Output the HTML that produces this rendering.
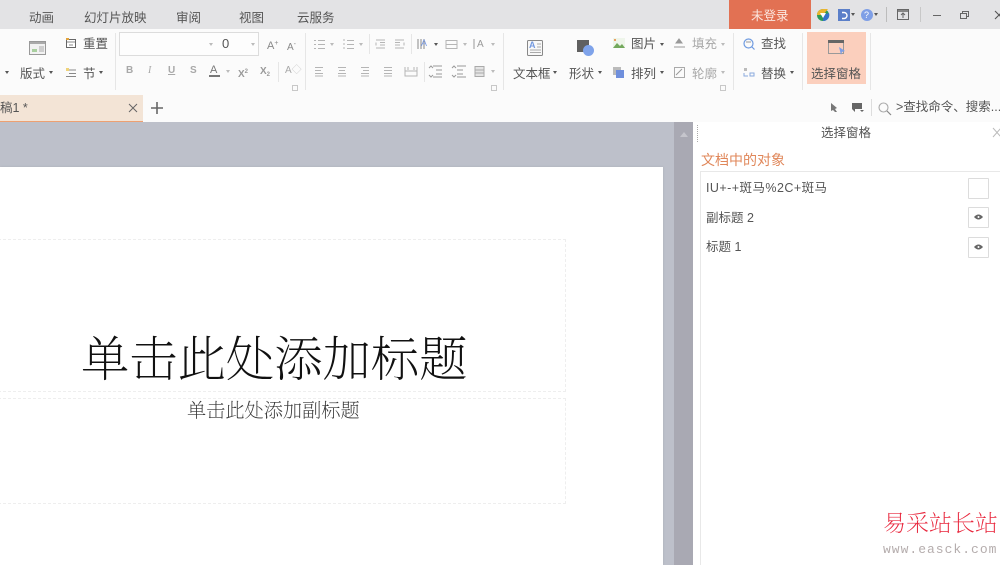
<!DOCTYPE html>
<html lang="zh"><head><meta charset="utf-8"><title>WPS</title>
<style>
html,body{margin:0;padding:0;background:#fff}
#p{position:relative;width:1000px;height:565px;overflow:hidden;background:#bdc0ca;font-family:"Liberation Sans","Noto Sans CJK SC",sans-serif;color:#555;filter:blur(.35px)}
.a{position:absolute}
.t{position:absolute;white-space:nowrap;line-height:16px;font-size:12.5px}
.g{color:#a8a8a8}
.c{position:absolute;width:0;height:0;border-left:2.5px solid transparent;border-right:2.5px solid transparent;border-top:3px solid #555}
.cg{border-top-color:#bbb}
.s{position:absolute;width:1px;background:#e6e6e6}
svg{position:absolute;overflow:visible}
.box{position:absolute;width:19px;height:19px;background:#fff;border:1px solid #dcdcdc;border-radius:1px}
</style></head><body><div id="p">
<!-- top bar -->
<div class="a" style="left:0;top:0;width:1000px;height:29px;background:#e3e3e5"></div>
<div class="t" style="left:29px;top:9.500px">动画</div>
<div class="t" style="left:84px;top:9.500px">幻灯片放映</div>
<div class="t" style="left:176px;top:9.500px">审阅</div>
<div class="t" style="left:239px;top:9.500px">视图</div>
<div class="t" style="left:297px;top:9.500px">云服务</div>
<div class="a" style="left:729px;top:0;width:82px;height:29px;background:#e27153"></div>
<div class="t" style="left:751px;top:8px;color:#fbe6df;font-size:12.5px">未登录</div>
<svg style="left:816px;top:8px" width="14" height="14" viewBox="0 0 14 14"><circle cx="7" cy="7" r="6" fill="#2d9a57"/><path d="M1 7a6 6 0 0 1 6-6h5l-5 6z" fill="#eab52e"/><path d="M13 5a6 6 0 0 1-6 8L7 7z" fill="#3573c9"/><path d="M4 5h6L7 10z" fill="#fff"/></svg>
<svg style="left:838px;top:9px" width="12" height="12" viewBox="0 0 12 12"><rect width="12" height="12" fill="#5b7fc9"/><path d="M4 3.5h2a3 3 0 0 1 0 6H4" fill="none" stroke="#fff" stroke-width="1.4"/></svg>
<div class="c" style="left:851px;top:13px"></div>
<div class="a" style="left:861px;top:9px;width:12px;height:12px;border-radius:50%;background:#7f9fe6"></div>
<div class="t" style="left:864px;top:7px;font-size:9px;color:#fff">?</div>
<div class="c" style="left:874px;top:13px"></div>
<div class="s" style="left:886px;top:7px;height:15px;background:#bcbcbc"></div>
<svg style="left:897px;top:9px" width="12" height="11" viewBox="0 0 12 11"><rect x=".5" y=".5" width="11" height="10" fill="none" stroke="#666"/><path d="M0 2h12" stroke="#666" stroke-width="1.5"/><path d="M6 9V4.5M4 6l2-2 2 2" fill="none" stroke="#666"/></svg>
<div class="s" style="left:920px;top:7px;height:15px;background:#c8c8c8"></div>
<div class="a" style="left:933px;top:15px;width:8px;height:1px;background:#666"></div>
<svg style="left:960px;top:11px" width="9" height="8" viewBox="0 0 9 8"><path d="M.5 2.5h6v5h-6zM2.5 2.5v-2h6v5h-2" fill="none" stroke="#666"/></svg>
<svg style="left:995px;top:11px" width="8" height="8" viewBox="0 0 8 8"><path d="M0 0l8 8M8 0L0 8" stroke="#555" stroke-width="1.1"/></svg>
<!-- ribbon -->
<div class="a" style="left:0;top:29px;width:1000px;height:93px;background:#fbfbfb"></div>
<div class="s" style="left:115px;top:33px;height:57px"></div>
<div class="s" style="left:305px;top:33px;height:57px"></div>
<div class="s" style="left:503px;top:33px;height:57px"></div>
<div class="s" style="left:733px;top:33px;height:57px"></div>
<div class="s" style="left:802px;top:33px;height:57px"></div>
<div class="s" style="left:870px;top:33px;height:57px"></div>
<div class="s" style="left:369px;top:34px;height:20px"></div>
<div class="s" style="left:411px;top:34px;height:20px"></div>
<div class="s" style="left:424px;top:62px;height:20px"></div>
<div class="s" style="left:278px;top:62px;height:20px"></div>
<!-- layout -->
<svg style="left:29px;top:41px" width="17" height="14" viewBox="0 0 17 14"><rect x=".5" y=".5" width="16" height="13" fill="#f2f2f2" stroke="#999"/><rect x="1" y="1" width="15" height="2" fill="#aaa"/><rect x="3" y="8" width="5" height="3" fill="#a9cf9f"/><path d="M10 6h5M10 8h5M10 10h5" stroke="#aaa"/></svg>
<div class="c" style="left:5px;top:71px"></div>
<div class="t" style="left:20px;top:66px">版式</div>
<div class="c" style="left:49px;top:71px"></div>
<svg style="left:66px;top:38px" width="10" height="10" viewBox="0 0 10 10"><rect x=".5" y="1.5" width="9" height="8" fill="#fff" stroke="#666"/><path d="M1 4h8M3 7h4" stroke="#888"/><rect x="0" y="0" width="3" height="2" fill="#e2a33c"/></svg>
<div class="t" style="left:83px;top:36px">重置</div>
<svg style="left:66px;top:68px" width="10" height="10" viewBox="0 0 10 10"><rect x="0" y="0" width="3" height="3" fill="#efd37a"/><path d="M3 2h7M3 5.5h7M0 8.500h10" stroke="#888" fill="none"/></svg>
<div class="t" style="left:83px;top:66px">节</div>
<div class="c" style="left:99px;top:71px"></div>
<!-- font -->
<div class="a" style="left:119px;top:32px;width:97px;height:22px;border:1px solid #dcdcdc;background:#fdfdfd"></div>
<div class="a" style="left:217px;top:32px;width:41px;height:22px;border:1px solid #dcdcdc;border-left:0;background:#fdfdfd"></div>
<div class="c cg" style="left:209px;top:43px"></div>
<div class="c cg" style="left:251px;top:43px"></div>
<div class="t" style="left:222px;top:36px;font-size:13px">0</div>
<div class="t g" style="left:267px;top:36px;font-size:11px;color:#888">A<span style="font-size:7px;vertical-align:4px">+</span></div>
<div class="t g" style="left:287px;top:37px;font-size:10px;color:#888">A<span style="font-size:7px;vertical-align:4px">-</span></div>
<div class="t g" style="left:126px;top:63px;font-size:10px;font-weight:bold">B</div>
<div class="t g" style="left:148px;top:63px;font-size:10px;font-style:italic;font-family:'Liberation Serif',serif">I</div>
<div class="t g" style="left:168px;top:63px;font-size:10px;text-decoration:underline;font-weight:bold">U</div>
<div class="t g" style="left:190px;top:63px;font-size:10px;font-weight:bold">S</div>
<div class="t" style="left:210px;top:62px;font-size:11px;color:#777">A</div>
<div class="a" style="left:209px;top:75px;width:11px;height:2px;background:#777"></div>
<div class="c cg" style="left:226px;top:70px"></div>
<div class="t g" style="left:238px;top:64px;font-size:10px;color:#999;font-weight:bold">X<span style="font-size:6px;vertical-align:4px">2</span></div>
<div class="t g" style="left:260px;top:64px;font-size:10px;color:#999;font-weight:bold">X<span style="font-size:6px;vertical-align:-2px">2</span></div>
<div class="t g" style="left:285px;top:63px;font-size:10px">A<span style="color:#ccc">◇</span></div>
<svg style="left:292px;top:85px" width="6" height="6"><rect x=".5" y=".5" width="5" height="5" fill="none" stroke="#c8c8c8"/></svg>
<svg style="left:491px;top:85px" width="6" height="6"><rect x=".5" y=".5" width="5" height="5" fill="none" stroke="#c8c8c8"/></svg>
<svg style="left:720px;top:85px" width="6" height="6"><rect x=".5" y=".5" width="5" height="5" fill="none" stroke="#c8c8c8"/></svg>
<!-- paragraph -->
<svg style="left:314px;top:39px" width="300" height="50" viewBox="0 0 300 50" fill="none" stroke="#b5b5b5">
<path d="M0 1.500h2M4 1.500h7M0 5.500h2M4 5.500h7M0 9.500h2M4 9.500h7"/>
<path d="M30 0v2M30 4v2M30 8v2M33 1.500h7M33 5.500h7M33 9.500h7"/>
<path d="M62 1h9M66 3.500h5M66 6h5M62 9h9M62 3.500v3"/>
<path d="M81 1h9M81 3.500h5M81 6h5M81 9h9M90 3.500v3"/>
<path d="M104 0v10M107 0v10M110 0v10" stroke="#888"/>
<path d="M132 1.500h11v8h-11zM132 5.500h11"/>
<path d="M160 0v10" stroke="#999"/>
<path d="M1 28.500h8M1 31.500h6M1 34.500h8M1 37h8"/>
<path d="M24 28.500h8M25 31.500h6M24 34.500h8M24 37h8"/>
<path d="M47 28.500h8M49 31.500h6M47 34.500h8M47 37h8"/>
<path d="M70 28.500h8M70 31.500h8M70 34.500h8M70 37h8"/>
<path d="M91 28v9h12v-9M91 32h12M94 28v3M100 28v3"/>
<path d="M119 27h9M122 31h6M122 35h6M119 38h9M115 29l2-2 2 2M115 36l2 2 2-2" stroke="#999"/>
<path d="M143 27h9M143 31h6M143 35h6M143 38h9M138 29l2-2 2 2M138 36l2 2 2-2" stroke="#999"/>
<path d="M161 27.500h9v10h-9zM161 31h9M161 34h9" fill="#e4e4e4" stroke="#aaa"/>
</svg>
<div class="c cg" style="left:330px;top:43px"></div>
<div class="c cg" style="left:359px;top:43px"></div>
<div class="t" style="left:421px;top:35px;font-size:9px;color:#7f9fe6">A</div>
<div class="c" style="left:434px;top:43px"></div>
<div class="c cg" style="left:463px;top:43px"></div>
<div class="t" style="left:477px;top:37px;font-size:10px;color:#999">A</div>
<div class="c cg" style="left:491px;top:43px"></div>
<div class="c cg" style="left:491px;top:70px"></div>
<!-- insert -->
<svg style="left:527px;top:40px" width="17" height="16" viewBox="0 0 17 16"><rect x=".5" y=".5" width="15" height="15" rx="1" fill="#f8f8f8" stroke="#888"/><path d="M10 4h4M10 7h4M3 10h11M3 12.500h11" stroke="#aaa"/></svg>
<div class="t" style="left:529px;top:40px;font-size:9px;font-weight:bold;color:#7399e0;line-height:11px">A</div>
<div class="t" style="left:513px;top:66px">文本框</div>
<div class="c" style="left:553px;top:71px"></div>
<div class="a" style="left:577px;top:40px;width:12px;height:12px;background:#606060"></div>
<div class="a" style="left:583px;top:45px;width:11px;height:11px;border-radius:50%;background:#7fa3ea"></div>
<div class="t" style="left:569px;top:66px">形状</div>
<div class="c" style="left:598px;top:71px"></div>
<svg style="left:613px;top:38px" width="12" height="10" viewBox="0 0 12 10"><rect width="12" height="10" fill="#eef5ea"/><path d="M0 10l4-5 3 3 2-2 3 4z" fill="#73a85c"/><rect x="1" y="1" width="2" height="2" fill="#e8a05f"/></svg>
<div class="t" style="left:631px;top:36px">图片</div>
<div class="c" style="left:660px;top:43px"></div>
<svg style="left:613px;top:67px" width="12" height="12" viewBox="0 0 12 12"><rect x="0" y="0" width="8" height="8" fill="#bbb"/><rect x="3" y="3" width="8" height="8" fill="#6f8fdc"/></svg>
<div class="t" style="left:631px;top:66px">排列</div>
<div class="c" style="left:660px;top:71px"></div>
<svg style="left:674px;top:38px" width="11" height="10" viewBox="0 0 11 10"><path d="M2 5l3-4 3 4zM0 9h11" fill="#999" stroke="#999"/></svg>
<div class="t g" style="left:692px;top:36px">填充</div>
<div class="c cg" style="left:721px;top:43px"></div>
<svg style="left:674px;top:67px" width="11" height="11" viewBox="0 0 11 11"><rect x=".5" y=".5" width="10" height="10" fill="none" stroke="#aaa"/><path d="M2 8l6-6" stroke="#999"/></svg>
<div class="t g" style="left:692px;top:66px">轮廓</div>
<div class="c cg" style="left:721px;top:71px"></div>
<svg style="left:743px;top:38px" width="12" height="12" viewBox="0 0 12 12"><circle cx="5.500" cy="5.500" r="4.500" fill="none" stroke="#6f9be0" stroke-width="1.2"/><path d="M8.500 8.500l3 3" stroke="#6f9be0" stroke-width="1.2"/><path d="M3 4h5" stroke="#999"/></svg>
<div class="t" style="left:761px;top:36px">查找</div>
<svg style="left:743px;top:67px" width="12" height="11" viewBox="0 0 12 11"><path d="M1 1h3v3H1z" fill="#bbb"/><path d="M1 6v3h4M7 6h4v3H7z" fill="none" stroke="#8aa9de"/></svg>
<div class="t" style="left:761px;top:66px">替换</div>
<div class="c" style="left:790px;top:71px"></div>
<div class="a" style="left:807px;top:32px;width:59px;height:52px;background:#fbcfbd"></div>
<svg style="left:828px;top:40px" width="18" height="16" viewBox="0 0 18 16"><rect x=".5" y=".5" width="15" height="13" fill="none" stroke="#999"/><rect x="0" y="0" width="16" height="3" fill="#666"/><path d="M11 7l6 4-3 1-1 3z" fill="#7f9fe6"/></svg>
<div class="t" style="left:811px;top:66px;color:#555">选择窗格</div>
<!-- tab row -->
<div class="a" style="left:0;top:95px;width:143px;background:#f3e4d6;border-bottom:1px solid #eda072;box-sizing:border-box;height:27px"></div>
<div class="t" style="left:0;top:100px;font-size:12.5px">稿1 *</div>
<svg style="left:129px;top:104px" width="8" height="8"><path d="M0 0l8 8M8 0L0 8" stroke="#666"/></svg>
<svg style="left:151px;top:102px" width="12" height="12"><path d="M6 0v12M0 6h12" stroke="#666" stroke-width="1.6"/></svg>
<svg style="left:830px;top:103px" width="8" height="9" viewBox="0 0 8 9"><path d="M1 0l6 5-2 1 2 3-2 0-2-2-2 1z" fill="#777"/></svg>
<svg style="left:852px;top:103px" width="12" height="10" viewBox="0 0 12 10"><path d="M0 0h10v6H3v3L0 6z" fill="#666"/><path d="M8 7h4l-2 2z" fill="#666"/></svg>
<div class="s" style="left:871px;top:99px;height:17px;background:#ddd"></div>
<svg style="left:878px;top:102px" width="13" height="13" viewBox="0 0 13 13"><circle cx="5.500" cy="5.500" r="4.500" fill="none" stroke="#aaa" stroke-width="1.1"/><path d="M9 9l4 4" stroke="#888" stroke-width="1.2"/></svg>
<div class="t" style="left:896px;top:99px;font-size:12.5px">&gt;查找命令、搜索...</div>
<!-- slide -->
<div class="a" style="left:0;top:167px;width:663px;height:398px;background:#fff;box-shadow:0 0 2px #a9acb6"></div>
<div class="a" style="left:-2px;top:239px;width:568px;height:153px;border:1px dashed #eeeeee;box-sizing:border-box"></div>
<div class="a" style="left:-2px;top:398px;width:568px;height:106px;border:1px dashed #eeeeee;box-sizing:border-box"></div>
<div class="a" style="left:81px;top:333px;font-family:'Liberation Serif','Noto Serif CJK SC',serif;font-size:48.300px;font-weight:200;line-height:56px;color:#111;white-space:nowrap">单击此处添加标题</div>
<div class="a" style="left:187px;top:400px;font-family:'Liberation Serif','Noto Serif CJK SC',serif;font-size:19.200px;font-weight:200;line-height:24px;color:#333;white-space:nowrap">单击此处添加副标题</div>
<!-- scrollbar -->
<div class="a" style="left:674px;top:122px;width:19px;height:443px;background:#a9a9b3"></div>
<div class="a" style="left:680px;top:132px;width:0;height:0;border-left:4px solid transparent;border-right:4px solid transparent;border-bottom:5px solid #c5c5cc"></div>
<!-- pane -->
<div class="a" style="left:693px;top:122px;width:307px;height:443px;background:#fff"></div>
<div class="a" style="left:697px;top:125px;height:17px;border-left:1px dotted #aaa"></div>
<div class="t" style="left:821px;top:125px;font-size:12.500px">选择窗格</div>
<svg style="left:993px;top:128px" width="8" height="9"><path d="M0 0l8 9M8 0L0 9" stroke="#bbb"/></svg>
<div class="t" style="left:701px;top:152px;font-size:14px;color:#e0875a">文档中的对象</div>
<div class="a" style="left:700px;top:171px;width:300px;height:394px;border-left:1px solid #e8e8e8;border-top:1px solid #e8e8e8;box-sizing:border-box"></div>
<div class="t" style="left:706px;top:180px;font-size:12.500px;letter-spacing:.45px">IU+-+斑马%2C+斑马</div>
<div class="t" style="left:706px;top:210px;font-size:12.500px">副标题 2</div>
<div class="t" style="left:706px;top:239px;font-size:12.500px">标题 1</div>
<div class="box" style="left:968px;top:178px"></div>
<div class="box" style="left:968px;top:207px"></div>
<div class="box" style="left:968px;top:237px"></div>
<svg style="left:974px;top:214px" width="9" height="6" viewBox="0 0 9 6"><path d="M0 3q4.500-5 9 0q-4.500 5-9 0z" fill="#666"/><circle cx="4.500" cy="3" r="1" fill="#fff"/></svg>
<svg style="left:974px;top:244px" width="9" height="6" viewBox="0 0 9 6"><path d="M0 3q4.500-5 9 0q-4.500 5-9 0z" fill="#666"/><circle cx="4.500" cy="3" r="1" fill="#fff"/></svg>
<!-- watermark -->
<div class="a" style="left:883px;top:511px;font-family:'Liberation Serif','Noto Serif CJK SC',serif;font-size:23px;font-weight:200;line-height:26px;color:#e8263c;white-space:nowrap">易采站长站</div>
<div class="a" style="left:883px;top:541px;font-family:'Liberation Mono',monospace;font-size:13px;letter-spacing:1px;line-height:18px;color:#b5adad;white-space:nowrap">www.easck.com</div>
</div></body></html>
